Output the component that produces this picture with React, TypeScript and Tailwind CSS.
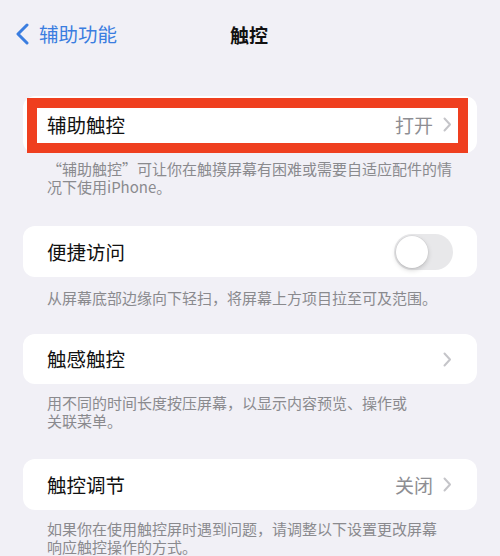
import React from "react";

const font = { fontFamily: '"Noto Sans CJK SC", "Noto Sans", sans-serif' };

function Chevron() {
  return (
    <svg width="9" height="15" viewBox="0 0 9 15" className="ml-[10px]">
      <path d="M1.5 1.5 L7 7.5 L1.5 13.5" fill="none" stroke="#c5c5c9" strokeWidth="2" strokeLinecap="round" strokeLinejoin="round" />
    </svg>
  );
}

export default function App() {
  return (
    <div className="w-[500px] h-[556px] overflow-hidden bg-[#f1f0f6] text-[#111]" style={font}>
      {/* nav */}
      <div className="relative h-[68px] flex items-center">
        <div className="flex items-center pl-[15px]">
          <svg width="14" height="22" viewBox="0 0 14 22">
            <path d="M12 2 L3 11 L12 20" fill="none" stroke="#3a7de0" strokeWidth="3" strokeLinecap="round" strokeLinejoin="round" />
          </svg>
          <span className="ml-[10px] text-[19.5px] text-[#3a7de0] leading-none">辅助功能</span>
        </div>
        <div className="absolute left-0 right-0 text-center text-[19px] font-bold leading-none pointer-events-none">
          <span className="ml-[-2px]">触控</span>
        </div>
      </div>

      <div className="px-[23px]">
        {/* Section 1 */}
        <div className="relative mt-[28px] h-[57px] bg-white rounded-[12px] flex items-center pl-[24px] pr-[25px]">
          <span className="text-[19.5px] leading-none">辅助触控</span>
          <div className="ml-auto flex items-center">
            <span className="text-[19px] text-[#8e8e93] leading-none">打开</span>
            <Chevron />
          </div>
          <div className="absolute left-[4px] right-[9px] top-[2px] bottom-0 border-[10px] border-[#ef3f1f]" />
        </div>
        <div className="px-[24px] pt-[7px] text-[15px] leading-[18px] text-[#8a8a8e] whitespace-nowrap">
          “辅助触控”可让你在触摸屏幕有困难或需要自适应配件的情<br />况下使用iPhone。
        </div>

        {/* Section 2 */}
        <div className="mt-[30px] h-[51px] bg-white rounded-[12px] flex items-center pl-[24px] pr-[24px]">
          <span className="text-[19.5px] leading-none">便捷访问</span>
          <div className="ml-auto w-[59px] h-[36px] rounded-full bg-[#e8e8ea] p-[2px] flex items-center">
            <div className="w-[32px] h-[32px] rounded-full bg-white shadow-[0_2px_5px_rgba(0,0,0,0.18),0_0_0_0.5px_rgba(0,0,0,0.06)]" />
          </div>
        </div>
        <div className="px-[24px] pt-[12px] text-[15px] leading-[18px] text-[#8a8a8e] whitespace-nowrap">
          从屏幕底部边缘向下轻扫，将屏幕上方项目拉至可及范围。
        </div>

        {/* Section 3 */}
        <div className="mt-[27px] h-[50px] bg-white rounded-[12px] flex items-center pl-[24px] pr-[25px]">
          <span className="text-[19.5px] leading-none">触感触控</span>
          <div className="ml-auto flex items-center">
            <Chevron />
          </div>
        </div>
        <div className="px-[24px] pt-[10px] text-[15px] leading-[18px] text-[#8a8a8e] whitespace-nowrap">
          用不同的时间长度按压屏幕，以显示内容预览、操作或<br />关联菜单。
        </div>

        {/* Section 4 */}
        <div className="mt-[29px] h-[51px] bg-white rounded-[12px] flex items-center pl-[24px] pr-[25px]">
          <span className="text-[19.5px] leading-none">触控调节</span>
          <div className="ml-auto flex items-center">
            <span className="text-[19px] text-[#8e8e93] leading-none">关闭</span>
            <Chevron />
          </div>
        </div>
        <div className="px-[24px] pt-[10px] text-[15px] leading-[18px] text-[#8a8a8e] whitespace-nowrap">
          如果你在使用触控屏时遇到问题，请调整以下设置更改屏幕<br />响应触控操作的方式。
        </div>
      </div>
    </div>
  );
}
